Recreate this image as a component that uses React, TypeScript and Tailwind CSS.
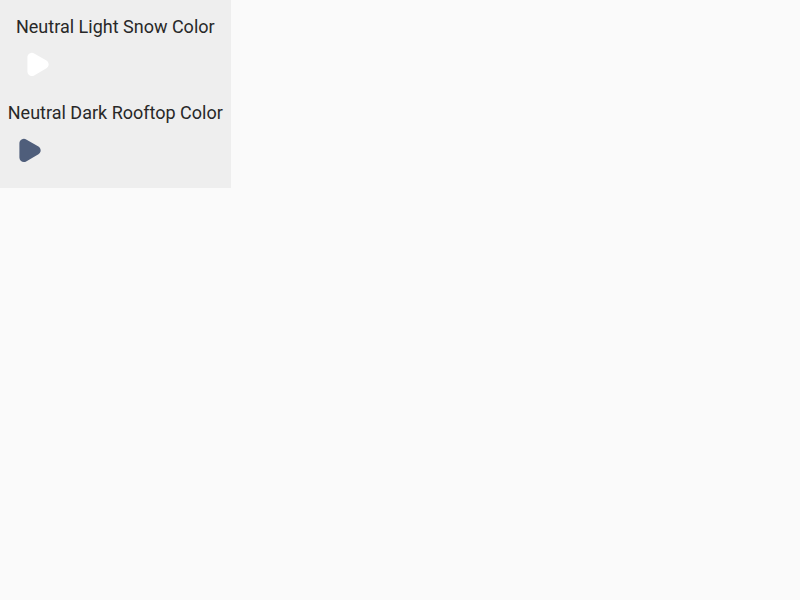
function PlayIcon({ className }: { className: string }) {
  return (
    <svg
      viewBox="0 0 28 28"
      className={`block size-7 ${className}`}
      fill="currentColor"
      stroke="currentColor"
      strokeWidth="9"
      strokeLinejoin="round"
      aria-hidden="true"
    >
      <path d="M7.9 7.3V21.6L20.2 14.45Z" />
    </svg>
  );
}

function Sample({ label, color }: { label: string; color: string }) {
  return (
    <section className="flex flex-col items-start">
      <h2 className="-ml-[0.4px] h-[21px] whitespace-nowrap text-[18px] leading-[21px] text-[#282828]">{label}</h2>
      <div className="px-2 pt-[13px] pb-2">
        <PlayIcon className={color} />
      </div>
    </section>
  );
}

export default function App() {
  return (
    <main className="min-h-screen bg-[#fafafa] font-[Roboto,sans-serif]">
      <div className="flex h-[188px] w-[231px] flex-col items-center gap-4 bg-[#eeeeee] pt-4">
        <Sample label="Neutral Light Snow Color" color="text-white" />
        <Sample label="Neutral Dark Rooftop Color" color="text-[#4f5e7b]" />
      </div>
    </main>
  );
}
